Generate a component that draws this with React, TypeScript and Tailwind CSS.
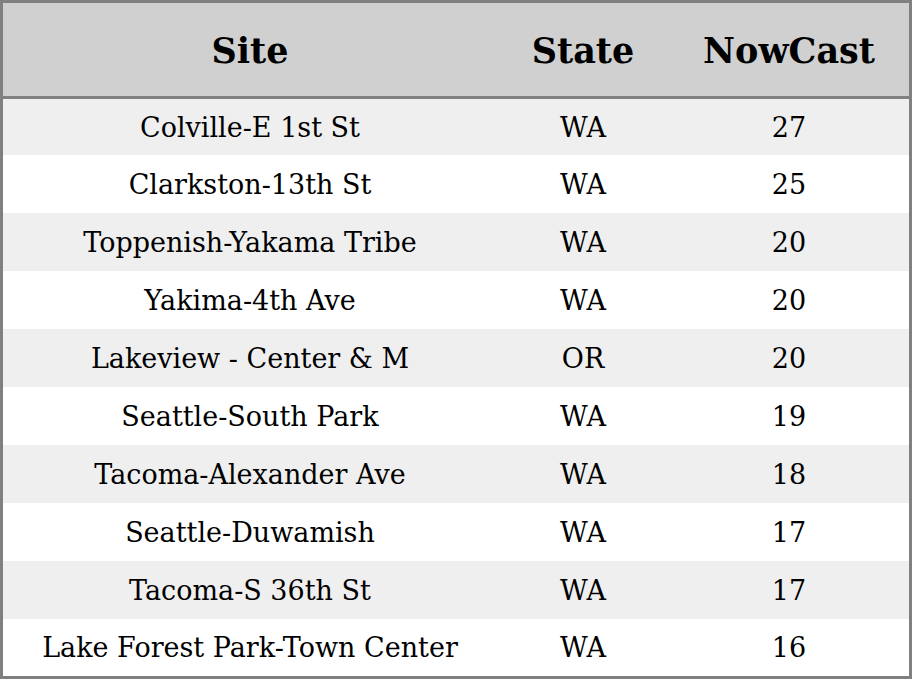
import React from "react";

const rows: [string, string, string][] = [
  ["Colville-E 1st St", "WA", "27"],
  ["Clarkston-13th St", "WA", "25"],
  ["Toppenish-Yakama Tribe", "WA", "20"],
  ["Yakima-4th Ave", "WA", "20"],
  ["Lakeview - Center & M", "OR", "20"],
  ["Seattle-South Park", "WA", "19"],
  ["Tacoma-Alexander Ave", "WA", "18"],
  ["Seattle-Duwamish", "WA", "17"],
  ["Tacoma-S 36th St", "WA", "17"],
  ["Lake Forest Park-Town Center", "WA", "16"],
];

export default function App() {
  return (
    <div
      className="w-[912px] h-[679px] bg-white border-[3px] border-[#808080] flex flex-col text-black"
      style={{ fontFamily: '"DejaVu Serif", serif' }}
    >
      <div className="h-[96px] shrink-0 pt-[4px] bg-[#d0d0d0] grid grid-cols-[494px_172px_1fr] items-center text-[35px] font-bold border-b-[3px] border-[#808080]">
        <div className="text-center">Site</div>
        <div className="text-center">State</div>
        <div className="text-center">NowCast</div>
      </div>
      <div className="flex-1 flex flex-col">
        {rows.map((r, i) => (
          <div
            key={i}
            className={`${
              i === 0 ? "h-[56px]" : i === rows.length - 1 ? "h-[57px]" : "h-[58px]"
            } shrink-0 pt-[2px] grid grid-cols-[494px_172px_1fr] items-center text-[27px] ${
              i % 2 === 0 ? "bg-[#efefef]" : "bg-white"
            }`}
          >
            <div className="text-center">{r[0]}</div>
            <div className="text-center">{r[1]}</div>
            <div className="text-center">{r[2]}</div>
          </div>
        ))}
      </div>
    </div>
  );
}
